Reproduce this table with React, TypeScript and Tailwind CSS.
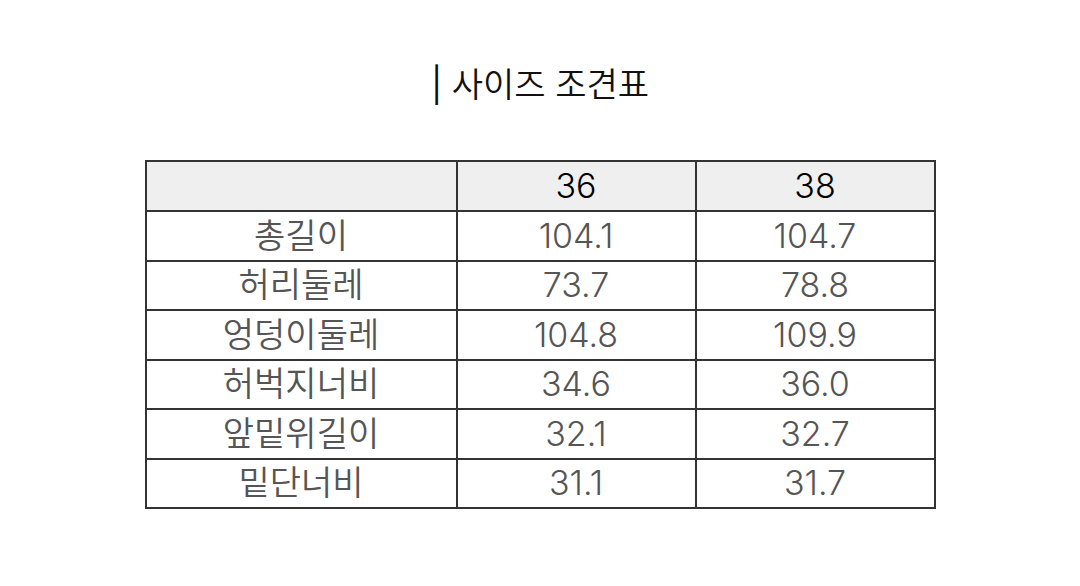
const rows: [string, string, string][] = [
  ['총길이', '104.1', '104.7'],
  ['허리둘레', '73.7', '78.8'],
  ['엉덩이둘레', '104.8', '109.9'],
  ['허벅지너비', '34.6', '36.0'],
  ['앞밑위길이', '32.1', '32.7'],
  ['밑단너비', '31.1', '31.7'],
];

export default function App() {
  return (
    <div
      className="w-[1080px] h-[586px] bg-white flex flex-col items-center"
      style={{ fontFamily: 'Inter, "Noto Sans CJK KR", "Noto Sans", sans-serif' }}
    >
      <h1 className="mt-[62px] text-[34px] leading-[46px] font-[350] text-[#111]">
        <span className="font-normal">|</span> 사이즈 조견표
      </h1>
      <table className="mt-[52px] w-[789px] border-collapse border-2 border-[#333] table-fixed">
        <colgroup>
          <col className="w-[311px]" />
          <col className="w-[239px]" />
          <col className="w-[239px]" />
        </colgroup>
        <thead>
          <tr className="h-[50px] bg-[#efefef]">
            <th className="border-2 border-[#333] font-normal"></th>
            <th className="border-2 border-[#333] font-[350] text-[34px] leading-none text-black">36</th>
            <th className="border-2 border-[#333] font-[350] text-[34px] leading-none text-black">38</th>
          </tr>
        </thead>
        <tbody>
          {rows.map(([label, a, b]) => (
            <tr key={label} className="h-[49.5px] text-[34px] leading-none text-[#555] font-[350]">
              <td className="border-2 border-[#333] text-center text-[34px]">{label}</td>
              <td className="border-2 border-[#333] text-center">{a}</td>
              <td className="border-2 border-[#333] text-center">{b}</td>
            </tr>
          ))}
        </tbody>
      </table>
    </div>
  );
}
